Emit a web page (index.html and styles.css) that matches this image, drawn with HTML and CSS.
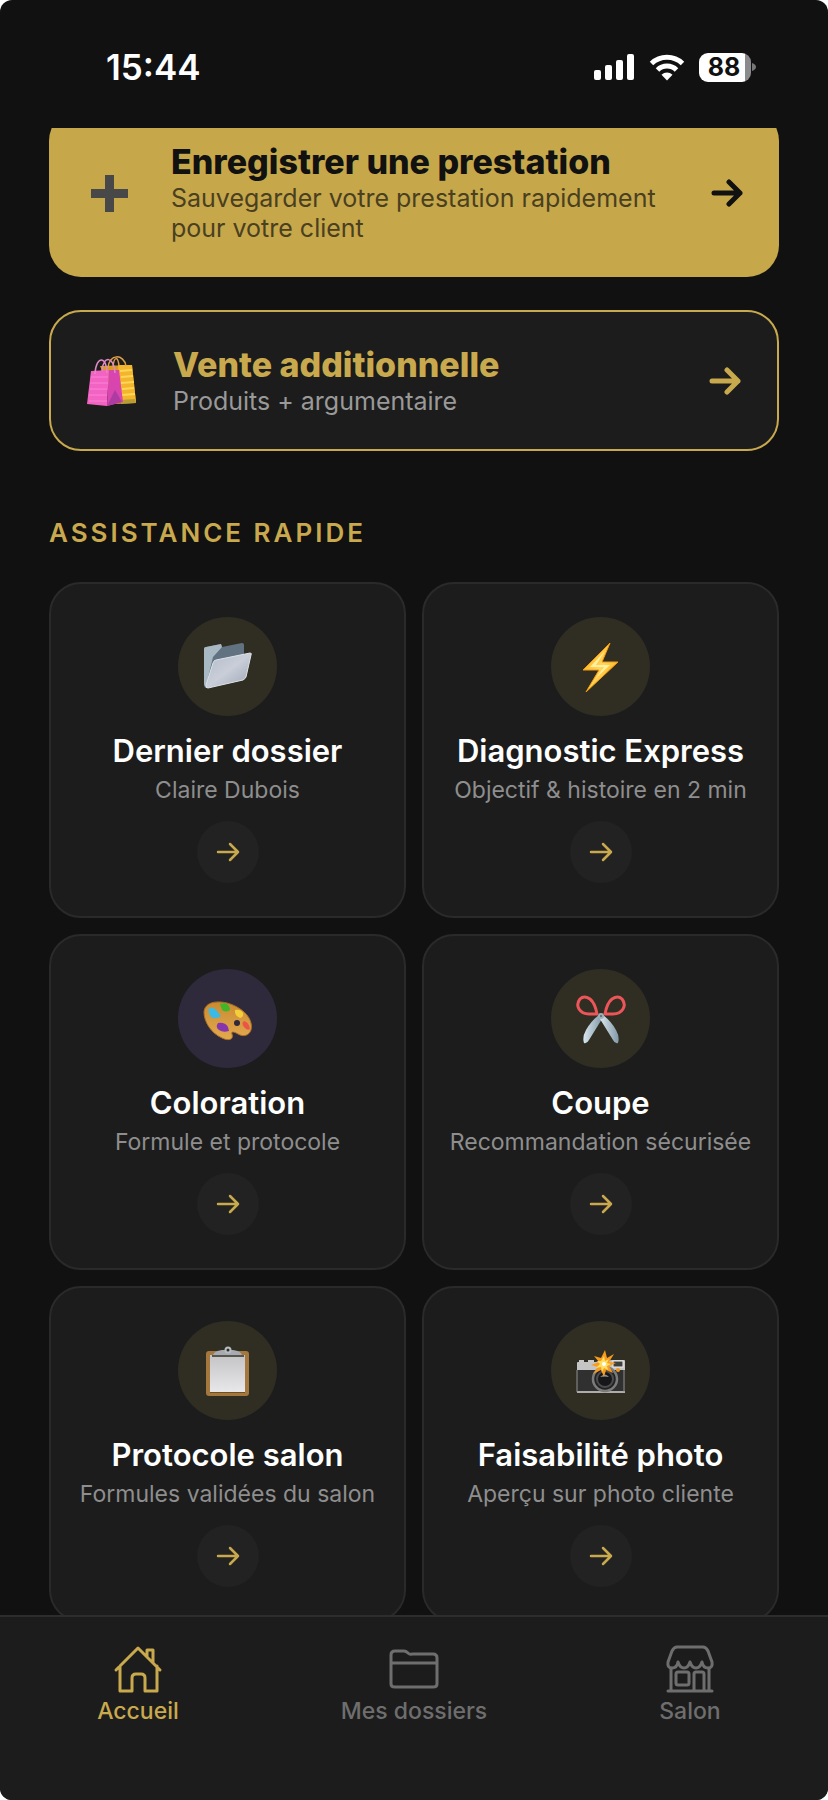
FILE: index.html
```
<!DOCTYPE html>
<html lang="fr">
<head>
    <meta charset="UTF-8" />
    <meta name="viewport" content="width=device-width, initial-scale=1.0" />
    <title>Accueil</title>
    <link rel="stylesheet" href="styles.css">
</head>
<body>
    <!-- Shared icons and gradients -->
    <svg class="sprite" aria-hidden="true">
        <defs>
            <linearGradient id="bolt-fill" x1="0" y1="0" x2="1" y2="1">
                <stop offset="0.2" stop-color="#ffb21c" />
                <stop offset="0.5" stop-color="#ffd860" />
                <stop offset="0.8" stop-color="#ffac14" />
            </linearGradient>
            <linearGradient id="folder-front" x1="0" y1="0" x2="1" y2="1">
                <stop offset="0" stop-color="#b4bcc7" />
                <stop offset="0.5" stop-color="#c9ced9" />
                <stop offset="1" stop-color="#9ba6b2" />
            </linearGradient>
            <linearGradient id="palette-fill" x1="0" y1="0" x2="0" y2="1">
                <stop offset="0" stop-color="#c98b32" />
                <stop offset="1" stop-color="#e3a94f" />
            </linearGradient>
            <linearGradient id="blade" x1="0" y1="0" x2="1" y2="0">
                <stop offset="0" stop-color="#d9e6ee" />
                <stop offset="1" stop-color="#8299a8" />
            </linearGradient>
            <linearGradient id="paper" x1="0" y1="0" x2="0" y2="1">
                <stop offset="0" stop-color="#c4c4c6" />
                <stop offset="1" stop-color="#e8e8ea" />
            </linearGradient>
        </defs>
        <symbol id="arrow" viewBox="0 0 24 20">
            <path d="M2 10H22M14 2l8 8-8 8" />
        </symbol>
        <symbol id="arrow-bold" viewBox="0 0 32 28">
            <path d="M3 14H29M18 3l11 11-11 11" />
        </symbol>
    </svg>

    <!-- Status bar -->
    <header class="status-bar">
        <span class="clock">15:44</span>
        <div class="status-icons">
            <svg width="41" height="28" viewBox="0 0 41 28" fill="#fff">
                <rect x="0" y="17" width="7" height="10" rx="2" />
                <rect x="11" y="12" width="7" height="15" rx="2" />
                <rect x="22" y="7" width="7" height="20" rx="2" />
                <rect x="33" y="1" width="7" height="26" rx="2" />
            </svg>
            <svg width="36" height="28" viewBox="0 0 36 28" fill="none" stroke="#fff" stroke-width="5">
                <path d="M2.500 10.500a22.500 22.500 0 0 1 31 0" />
                <path d="M8.500 17a13.500 13.500 0 0 1 19 0" />
                <path d="M18 27.500l-5.500-5.700a8 8 0 0 1 11 0z" fill="#fff" stroke="none" />
            </svg>
            <div class="battery">
                <span class="battery-level">88</span>
                <svg width="4" height="10" viewBox="0 0 4 10"><path d="M0 1q4 1.500 4 4t-4 4z" fill="#77777a" /></svg>
            </div>
        </div>
    </header>

    <!-- Main Content -->
    <main class="content">
        <a class="action action-primary" href="#prestation">
            <svg class="action-icon" viewBox="0 0 50 50" fill="#484848">
                <path d="M20 7h9v14h14v9H29v14h-9V30H6v-9h14z" />
            </svg>
            <div class="action-text">
                <h2>Enregistrer une prestation</h2>
                <p>Sauvegarder votre prestation rapidement pour votre client</p>
            </div>
            <svg class="action-arrow"><use href="#arrow-bold" /></svg>
        </a>

        <a class="action action-outline" href="#vente">
            <svg class="action-icon" viewBox="0 0 50 50">
                <path d="M13 10l32-1 4 38-20 1z" fill="#d99a20" />
                <path d="M31 9l14 0 4 37-15 1z" fill="#f2b52c" />
                <path d="M33 15l12-1M34 21l12-1M34 27l13-1M35 33l12-1M35 39l13-1" stroke="#ffd65a" stroke-width="2" />
                <path d="M34 44l14-1 1 4-15 1z" fill="#b99c36" />
                <path d="M21 12C22 -3 37 -2 39 10M26 11C27 0 31 0 32 10" fill="none" stroke="#e0a04a" stroke-width="1.500" />
                <path d="M4 15l18-1-2 36-20-2z" fill="#f263c4" />
                <path d="M22 14l10 0 4 32-16 4z" fill="#d845ae" />
                <path d="M28 34l7 12-15 4z" fill="#ae3ba1" />
                <path d="M4 21h17M3 27h18M3 33h17M2 39h18M2 45h18" stroke="#fb83d3" stroke-width="1" />
                <path d="M8 18C9 -1 20 0 20 17M15 15C16 -1 27 0 28 17" fill="none" stroke="#e089c4" stroke-width="1.500" />
            </svg>
            <div class="action-text">
                <h2>Vente additionnelle</h2>
                <p>Produits + argumentaire</p>
            </div>
            <svg class="action-arrow"><use href="#arrow-bold" /></svg>
        </a>

        <h3 class="section-title">Assistance rapide</h3>

        <!-- Quick assistance cards -->
        <div class="card-grid">
            <a class="card" href="#dossier">
                <div class="card-icon">
                    <svg viewBox="0 0 50 50">
                        <path d="M1 7q0-2 2-2l15-3 1 3 20-4q2 0 2 2v30L4 46q-3 0-3-3z" fill="#617381" />
                        <path d="M1 7q0-2 2-2l15-3 1 3-9 10L3 44q-2 0-2-2z" fill="#a9b9c4" />
                        <path d="M13 18l34-7q2 0 1 2l-5 22q-1 2-3 3L5 46q-3 0-2-3l7-22q1-3 3-3z" fill="url(#folder-front)" stroke="#dde2e9" />
                    </svg>
                </div>
                <h4>Dernier dossier</h4>
                <p>Claire Dubois</p>
                <span class="card-arrow"><svg><use href="#arrow" /></svg></span>
            </a>
            <a class="card" href="#diagnostic">
                <div class="card-icon">
                    <svg viewBox="0 0 50 50">
                        <path d="M34 1L7 28h16L10 50 42 20H26z" fill="url(#bolt-fill)" stroke="#f59a0c" stroke-width="1" />
                        <path d="M29 9L14 25h14L20 36 34 23H20z" fill="#fff0a0" />
                    </svg>
                </div>
                <h4>Diagnostic Express</h4>
                <p>Objectif &amp; histoire en 2 min</p>
                <span class="card-arrow"><svg><use href="#arrow" /></svg></span>
            </a>
            <a class="card" href="#coloration">
                <div class="card-icon card-icon-purple">
                    <svg viewBox="0 0 50 50">
                        <path d="M1 18C2 5 22 6 34 13c11 6 16 15 14 23-2 6-8 7-13 4-5-3-7-2-6 0 2 6-4 7-10 4C8 39 1 28 1 18z" fill="url(#palette-fill)" stroke="#a96f25" stroke-width="1" />
                        <circle cx="34" cy="29" r="3" fill="#2e293b" />
                        <path d="M6 14q5-1 8 3l4 5q-5 4-10 1-3-3-2-9z" fill="#3cbae6" />
                        <path d="M17 10l5-1q5 2 5 7-4 3-8 0z" fill="#43b526" />
                        <path d="M32 16q6-1 8 3 1 4-3 5-6-3-5-8z" fill="#f5cf3b" />
                        <path d="M41 27q5 1 6 8-3 2-6-2-3-4 0-6z" fill="#ea5548" />
                        <path d="M15 29q7-1 10 4l1 4q-6 2-10-1-4-3-1-7z" fill="#8535ae" />
                    </svg>
                </div>
                <h4>Coloration</h4>
                <p>Formule et protocole</p>
                <span class="card-arrow"><svg><use href="#arrow" /></svg></span>
            </a>
            <a class="card" href="#coupe">
                <div class="card-icon">
                    <svg viewBox="0 0 50 50">
                        <path d="M23 21q-8 6-13 15-4 7-2 13 3 1 5-3l13-21z" fill="url(#blade)" />
                        <path d="M27 21q8 6 13 15 4 7 2 13-3 1-5-3L24 25z" fill="url(#blade)" />
                        <path d="M21 20q-2-11-7-15-6-4-10 0-4 5-1 10 3 5 10 5zM29 20q2-11 7-15 6-4 10 0 4 5 1 10-3 5-10 5z" fill="none" stroke="#ec5559" stroke-width="3" stroke-linejoin="round" />
                        <circle cx="25" cy="22" r="3" fill="#9eafb9" />
                        <circle cx="25" cy="22" r="1" fill="#53626b" />
                    </svg>
                </div>
                <h4>Coupe</h4>
                <p>Recommandation sécurisée</p>
                <span class="card-arrow"><svg><use href="#arrow" /></svg></span>
            </a>
            <a class="card" href="#protocole">
                <div class="card-icon">
                    <svg viewBox="0 0 50 50">
                        <rect x="3" y="5" width="43" height="45" rx="3" fill="#a3773e" />
                        <rect x="7" y="9" width="35" height="37" fill="url(#paper)" />
                        <path d="M7 46h35v1H7z" fill="#71501f" />
                        <path d="M10 9q1-4 9-5h11q8 1 9 5z" fill="#a6abb2" />
                        <path d="M9 9h32v2H9z" fill="#59544d" />
                        <circle cx="25" cy="4" r="2.500" fill="#302e24" stroke="#b9bdc1" stroke-width="2" />
                    </svg>
                </div>
                <h4>Protocole salon</h4>
                <p>Formules validées du salon</p>
                <span class="card-arrow"><svg><use href="#arrow" /></svg></span>
            </a>
            <a class="card" href="#faisabilite">
                <div class="card-icon">
                    <svg viewBox="0 0 50 50">
                        <rect x="3" y="14" width="5" height="6" fill="#c8c8c8" />
                        <rect x="12" y="14" width="6" height="6" fill="#c8c8c8" />
                        <path d="M1 18h48v29H1z" fill="#303031" />
                        <path d="M1 17q0-1 1-1h17l17-2h12q1 0 1 1v9H1z" fill="#c5c5c5" />
                        <path d="M1 45h48v2H1z" fill="#acacac" />
                        <path d="M1 24v22M48 24v22" stroke="#8f8f8f" />
                        <rect x="37" y="15" width="10" height="6" fill="#40413d" stroke="#eee" />
                        <circle cx="29" cy="33" r="12" fill="#222" stroke="#7b7b7b" stroke-width="2.500" />
                        <circle cx="29" cy="33" r="8" fill="#171719" stroke="#4c4d50" stroke-width="2" />
                        <path d="M24 31q5-5 9 0-5-1-9 0z" fill="#8e8f93" />
                        <circle cx="42" cy="24" r="2" fill="#f29a19" />
                        <path d="M29 4l2 8 7-4-5 8 7 1-7 3 4 7-7-3-2 7-3-7-8 4 5-7-7-2 8-3-5-6 7 2z" fill="#f99b1c" />
                        <path d="M28 10l1 5 4-2-2 4 4 1-4 2 1 4-4-2-2 4-1-5-5 1 4-4-3-3 4 0z" fill="#ffdf61" />
                        <circle cx="28" cy="18" r="2" fill="#fff" />
                    </svg>
                </div>
                <h4>Faisabilité photo</h4>
                <p>Aperçu sur photo cliente</p>
                <span class="card-arrow"><svg><use href="#arrow" /></svg></span>
            </a>
        </div>
    </main>

    <!-- Bottom tabs -->
    <nav class="tabs">
        <a class="tab tab-active" href="#accueil">
            <svg viewBox="0 0 50 50">
                <path d="M3 26L25 4l22 22M34 13V6h6v13M7 22v25h12V34q0-4 4-4h5q4 0 4 4v13h12V22" />
            </svg>
            <span>Accueil</span>
        </a>
        <a class="tab" href="#dossiers">
            <svg viewBox="0 0 50 50">
                <path d="M2 19V11q0-4 4-4h9q2 0 4 2t4 1h21q4 0 4 4v26q0 3-4 3H6q-4 0-4-3zM2 19h46" />
            </svg>
            <span>Mes dossiers</span>
        </a>
        <a class="tab" href="#salon">
            <svg viewBox="0 0 50 50">
                <path d="M12 3h26q3 0 5 4l4 11q1 6-4 6-5 0-6-6-2 6-6 6t-6-6q-2 6-6 6t-6-6q-1 6-6 6-5 0-4-6L7 7q2-4 5-4z" />
                <path d="M6 24v22M44 24v22M3 47h44M13 28h9q2 0 2 2v9q0 2-2 2h-9q-2 0-2-2v-9q0-2 2-2zM29 46V30q0-2 2-2h6q2 0 2 2v16" />
            </svg>
            <span>Salon</span>
        </a>
    </nav>
</body>
</html>
```
FILE: styles.css
```
* {
    box-sizing: border-box;
}
html {
    background-color: #fff;
}
body {
    display: flex;
    flex-direction: column;
    height: 100vh;
    margin: 0;
    border-radius: 12px;
    overflow: hidden;
    background-color: #111;
    font-family: Inter, "Liberation Sans", sans-serif;
    color: #fff;
}
a {
    color: inherit;
    text-decoration: none;
}
h2, h3, h4, p {
    margin: 0;
}
.sprite {
    position: absolute;
    width: 0;
    height: 0;
}
#arrow, #arrow-bold {
    fill: none;
    stroke: currentColor;
    stroke-linecap: round;
    stroke-linejoin: round;
}
#arrow {
    stroke-width: 2.5;
}
#arrow-bold {
    stroke-width: 5;
}

/* Status bar */
.status-bar {
    display: flex;
    flex-shrink: 0;
    justify-content: space-between;
    align-items: center;
    height: 128px;
    padding: 6px 72px 0 106px;
}
.clock {
    font-size: 35px;
    font-weight: 600;
}
.status-icons {
    display: flex;
    align-items: center;
    gap: 14px;
}
.battery {
    display: flex;
    align-items: center;
    gap: 1px;
}
.battery-level {
    width: 52px;
    height: 29px;
    padding-right: 2px;
    border-radius: 9px;
    background: linear-gradient(to right, #fff 88%, #8a8a8c 88%);
    color: #111;
    font-size: 25px;
    font-weight: 700;
    line-height: 29px;
    text-align: center;
}

/* Main actions */
.content {
    flex: 1;
    min-height: 0;
    padding: 0 49px;
    overflow: hidden;
}
.action {
    display: flex;
    align-items: center;
    gap: 36px;
    padding: 0 36px;
    border-radius: 32px;
}
/* top edge is scrolled under the status bar */
.action-primary {
    min-height: 168px;
    margin-top: -19px;
    background-color: #c6a84b;
    color: #111;
}
.action-outline {
    min-height: 141px;
    margin-top: 33px;
    border: 2px solid #c9a94d;
    background-color: #1c1c1c;
    color: #c9a94d;
}
.action-icon {
    flex-shrink: 0;
    width: 50px;
    height: 50px;
}
.action-text {
    flex: 1;
}
.action h2 {
    margin-bottom: 2px;
    font-size: 34px;
    font-weight: 800;
    line-height: 38px;
}
.action p {
    font-size: 25px;
    line-height: 30px;
}
.action-primary p {
    color: #4a3f1f;
}
.action-outline p {
    color: #999;
}
.action-arrow {
    flex-shrink: 0;
    width: 32px;
    height: 28px;
}

/* Cards */
.section-title {
    margin: 66px 0 33px;
    color: #c9a94d;
    font-size: 26px;
    font-weight: 600;
    line-height: 32px;
    letter-spacing: 3px;
    text-transform: uppercase;
}
.card-grid {
    display: grid;
    grid-template-columns: 1fr 1fr;
    gap: 16px;
}
.card {
    display: flex;
    flex-direction: column;
    align-items: center;
    padding: 33px 8px;
    border: 2px solid #2a2a2a;
    border-radius: 32px;
    background-color: #1c1c1c;
    text-align: center;
}
.card-icon {
    display: flex;
    justify-content: center;
    align-items: center;
    width: 99px;
    height: 99px;
    border-radius: 50%;
    background-color: #302e22;
}
.card-icon-purple {
    background-color: #2e293b;
}
.card-icon svg {
    width: 50px;
    height: 50px;
}
.card h4 {
    margin: 17px 0 6px;
    font-size: 31px;
    font-weight: 600;
    line-height: 36px;
}
.card p {
    color: #8e8e8e;
    font-size: 23px;
    line-height: 30px;
}
.card-arrow {
    display: flex;
    justify-content: center;
    align-items: center;
    width: 62px;
    height: 62px;
    margin-top: 16px;
    border-radius: 50%;
    background-color: #222;
    color: #c9a94d;
}
.card-arrow svg {
    width: 24px;
    height: 20px;
}

/* Bottom tabs */
.tabs {
    display: grid;
    flex-shrink: 0;
    grid-template-columns: repeat(3, 1fr);
    height: 185px;
    padding-top: 27px;
    border-top: 2px solid #2d2d2d;
    background-color: #1c1c1c;
}
.tab {
    display: flex;
    flex-direction: column;
    align-items: center;
    gap: 2px;
    color: #6e6e6e;
    font-size: 23px;
    font-weight: 500;
    line-height: 30px;
}
.tab-active {
    color: #c9a94d;
}
.tab svg {
    width: 50px;
    height: 50px;
    fill: none;
    stroke: currentColor;
    stroke-width: 3;
    stroke-linecap: round;
    stroke-linejoin: round;
}
```
